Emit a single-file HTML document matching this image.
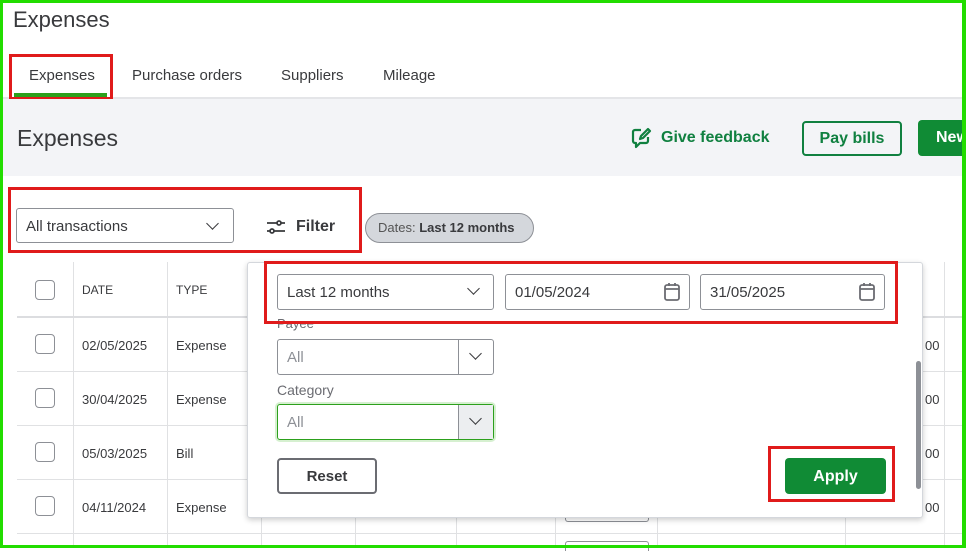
<!DOCTYPE html><html><head><style>
*{box-sizing:border-box;margin:0;padding:0}
body{width:966px;height:548px;position:relative;overflow:hidden;background:#fff;font-family:"Liberation Sans",sans-serif;color:#393a3d}
.a{position:absolute}
.red{position:absolute;border:3px solid #e01b1b}
.t{font-size:13px;color:#393a3d}
.vl{position:absolute;top:262px;width:1px;height:286px;background:#e0e1e3}
.hl{position:absolute;left:17px;right:0;height:1px;background:#e0e1e3}
.cb{position:absolute;left:35px;width:20px;height:20px;border:1px solid #8d9096;border-radius:4px;background:#fff}
.sel{position:absolute;border:1px solid #8d9096;border-radius:3px;background:#fff;font-size:15px;padding-left:9px;padding-top:1px;display:flex;align-items:center}
.chev{position:absolute;width:9px;height:9px;border-right:1.6px solid #393a3d;border-bottom:1.6px solid #393a3d;transform:rotate(45deg)}
</style></head><body>
<div class="a" style="left:13px;top:7px;font-size:22px;color:#393a3d">Expenses</div>
<div class="a" style="left:29px;top:67px;font-size:15px">Expenses</div>
<div class="a" style="left:132px;top:67px;font-size:15px">Purchase orders</div>
<div class="a" style="left:281px;top:67px;font-size:15px">Suppliers</div>
<div class="a" style="left:383px;top:67px;font-size:15px">Mileage</div>
<div class="a" style="left:14px;top:93px;width:93px;height:4px;background:#2ca01c"></div>
<div class="a" style="left:0;top:97px;width:966px;height:2px;background:#e4e5e8"></div>
<div class="red" style="left:9px;top:54px;width:104px;height:46px"></div>
<div class="a" style="left:0;top:99px;width:966px;height:77px;background:#f3f4f7"></div>
<div class="a" style="left:17px;top:125px;font-size:23px;color:#393a3d">Expenses</div>
<svg class="a" style="left:630px;top:127px" width="22" height="22" viewBox="0 0 22 22" fill="none" stroke="#108040" stroke-width="2.2" stroke-linejoin="round"><path d="M11 3H5a2 2 0 0 0-2 2v9a2 2 0 0 0 2 2h1v4l4-4h6a2 2 0 0 0 2-2v-4"/><path d="M10 12l1-3 7-7 2 2-7 7z"/></svg>
<div class="a" style="left:661px;top:129px;font-size:16px;font-weight:bold;color:#108040">Give feedback</div>
<div class="a" style="left:802px;top:121px;width:100px;height:35px;border:2px solid #108040;border-radius:4px;color:#108040;font-weight:bold;font-size:16px;text-align:center;line-height:32px">Pay bills</div>
<div class="a" style="left:918px;top:120px;width:60px;height:36px;background:#108b35;border-radius:4px;color:#fff;font-weight:bold;font-size:16px;line-height:36px;padding-left:18px">New</div>
<div class="red" style="left:8px;top:187px;width:354px;height:66px"></div>
<div class="sel" style="left:16px;top:208px;width:218px;height:35px;color:#393a3d">All transactions</div>
<div class="chev" style="left:208px;top:219px"></div>
<svg class="a" style="left:266px;top:219px" width="20" height="16" viewBox="0 0 20 16" stroke="#393a3d" stroke-width="1.8" fill="none"><path d="M1 4h10M15 4h4M1 12h3M8 12h11"/><circle cx="13" cy="4" r="2"/><circle cx="6" cy="12" r="2"/></svg>
<div class="a" style="left:296px;top:218px;font-size:16px;font-weight:bold">Filter</div>
<div class="a" style="left:365px;top:213px;width:169px;height:30px;border:1.5px solid #8d9096;border-radius:15px;background:#d4d7dc;font-size:13px;line-height:28px;padding-left:12px;color:#555">Dates: <b style="color:#393a3d">Last 12 months</b></div>
<div class="vl" style="left:73px"></div><div class="vl" style="left:167px"></div><div class="vl" style="left:261px"></div><div class="vl" style="left:355px"></div><div class="vl" style="left:456px"></div><div class="vl" style="left:555px"></div><div class="vl" style="left:657px"></div><div class="vl" style="left:845px"></div><div class="vl" style="left:944px"></div>
<div class="a" style="left:17px;top:316px;width:949px;height:2px;background:#dcdde0"></div>
<div class="hl" style="top:371px"></div><div class="hl" style="top:425px"></div><div class="hl" style="top:479px"></div><div class="hl" style="top:533px"></div>
<div class="cb" style="top:280px"></div><div class="cb" style="top:334px"></div><div class="cb" style="top:388px"></div><div class="cb" style="top:442px"></div><div class="cb" style="top:496px"></div>
<div class="a t" style="left:82px;top:283px;font-size:12px">DATE</div><div class="a t" style="left:176px;top:283px;font-size:12px">TYPE</div>
<div class="a t" style="left:82px;top:338px">02/05/2025</div><div class="a t" style="left:176px;top:338px">Expense</div>
<div class="a t" style="left:82px;top:392px">30/04/2025</div><div class="a t" style="left:176px;top:392px">Expense</div>
<div class="a t" style="left:82px;top:446px">05/03/2025</div><div class="a t" style="left:176px;top:446px">Bill</div>
<div class="a t" style="left:82px;top:500px">04/11/2024</div><div class="a t" style="left:176px;top:500px">Expense</div>
<div class="a t" style="left:925px;top:338px">00</div><div class="a t" style="left:925px;top:392px">00</div><div class="a t" style="left:925px;top:446px">00</div><div class="a t" style="left:925px;top:500px">00</div>
<div class="a" style="left:565px;top:510px;width:84px;height:12px;border:1px solid #8d9096;border-top:none;border-radius:0 0 3px 3px"></div>
<div class="a" style="left:565px;top:541px;width:84px;height:10px;border:1px solid #8d9096;border-bottom:none;border-radius:3px 3px 0 0"></div>
<div class="a" style="left:247px;top:262px;width:676px;height:256px;background:#fff;border:1px solid #d4d7dc;border-radius:3px;box-shadow:0 2px 6px rgba(0,0,0,.2)"></div>
<div class="a" style="left:916px;top:361px;width:5px;height:128px;background:#8d9096;border-radius:3px"></div>
<div class="a" style="left:277px;top:316px;font-size:13px;color:#6b6c72">Payee</div>
<div class="sel" style="left:277px;top:274px;width:217px;height:36px">Last 12 months</div><div class="chev" style="left:469px;top:284px"></div>
<div class="sel" style="left:505px;top:274px;width:185px;height:36px">01/05/2024</div>
<div class="sel" style="left:700px;top:274px;width:185px;height:36px">31/05/2025</div>
<svg class="a" style="left:663px;top:282px" width="18" height="20" viewBox="0 0 18 20" fill="none" stroke="#6b6c72" stroke-width="1.8"><rect x="2" y="3" width="14" height="15" rx="2"/><path d="M2 7h14M6 1v3M12 1v3"/></svg>
<svg class="a" style="left:858px;top:282px" width="18" height="20" viewBox="0 0 18 20" fill="none" stroke="#6b6c72" stroke-width="1.8"><rect x="2" y="3" width="14" height="15" rx="2"/><path d="M2 7h14M6 1v3M12 1v3"/></svg>
<div class="red" style="left:264px;top:261px;width:634px;height:63px"></div>
<div class="sel" style="left:277px;top:339px;width:217px;height:36px;color:#8d9096">All</div>
<div class="a" style="left:458px;top:340px;width:1px;height:34px;background:#8d9096"></div><div class="chev" style="left:471px;top:349px"></div>
<div class="a" style="left:277px;top:382px;font-size:14px;color:#6b6c72">Category</div>
<div class="sel" style="left:277px;top:404px;width:217px;height:36px;color:#8d9096;border-color:#2ca01c;box-shadow:0 0 0 2px #d6f0d0">All</div>
<div class="a" style="left:458px;top:405px;width:35px;height:34px;background:#eceef0;border-left:1px solid #8d9096"></div><div class="chev" style="left:471px;top:414px"></div>
<div class="a" style="left:277px;top:458px;width:100px;height:36px;border:2px solid #6b6c72;border-radius:4px;font-weight:bold;font-size:15px;text-align:center;line-height:33px">Reset</div>
<div class="red" style="left:768px;top:446px;width:127px;height:56px"></div>
<div class="a" style="left:785px;top:458px;width:101px;height:36px;background:#108b35;border-radius:4px;color:#fff;font-weight:bold;font-size:16px;text-align:center;line-height:37px">Apply</div>
<div class="a" style="left:0;top:0;width:966px;height:548px;border:3px solid #22dd00;border-right-width:4px;border-left-width:3px"></div>
</body></html>
